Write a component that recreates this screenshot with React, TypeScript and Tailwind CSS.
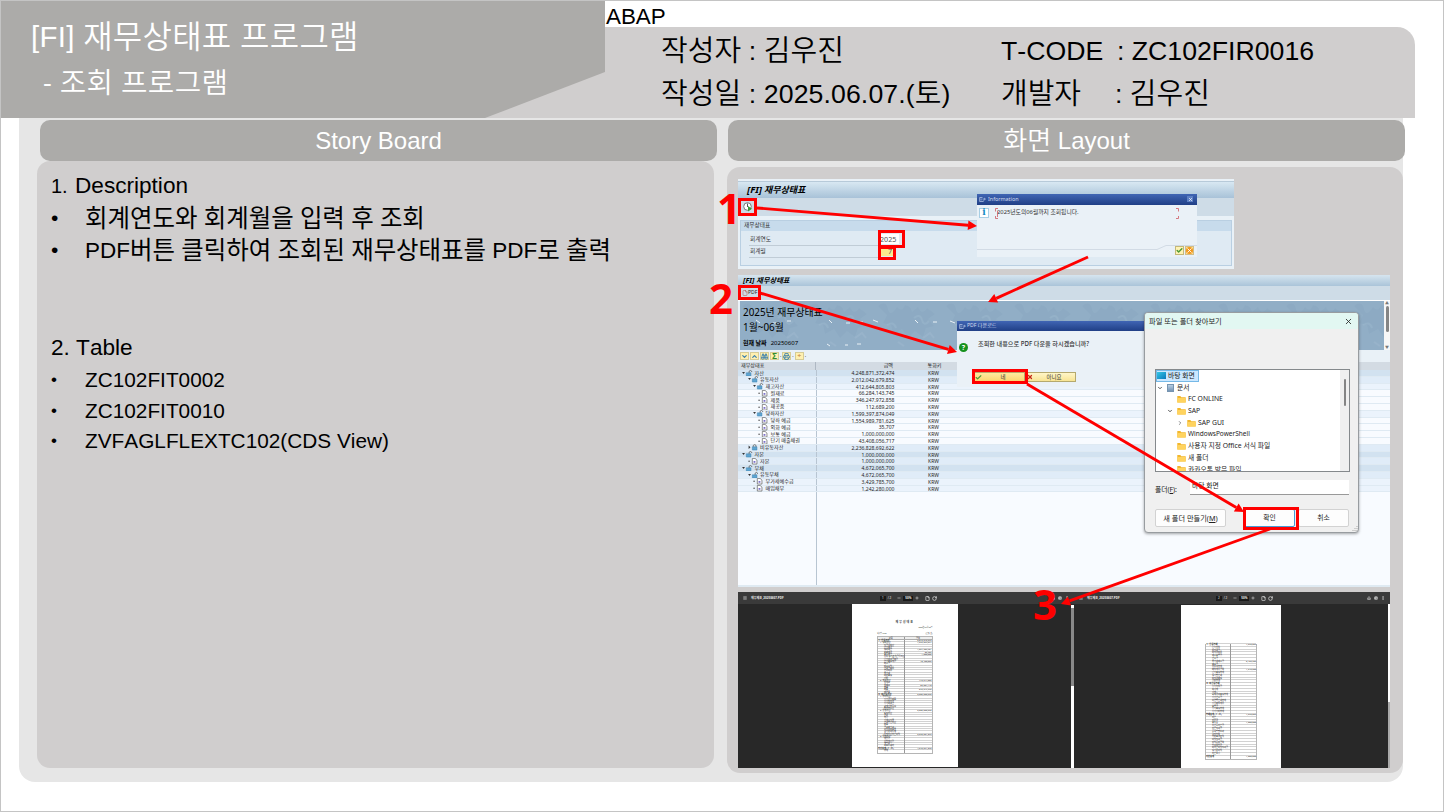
import React from "react";
import { Binoculars, Check, ChevronDown, ChevronRight, Download, Menu, Minus, MoreVertical, Plus, Printer, RotateCw, File, X } from "lucide-react";

const HANGUL = /([\uAC00-\uD7A3]+)/;

function Mixed({ text }: { text: string }) {
  return (
    <>
      {text.split(HANGUL).map((part, i) =>
        HANGUL.test(part) ? (
          <span key={i} className="align-[-0.045em] text-[1.087em] leading-[0]">{part}</span>
        ) : (
          <span key={i}>{part}</span>
        ),
      )}
    </>
  );
}

function Header() {
  return (
    <header className="flex h-[117px] w-full shrink-0 font-[350]">
      <div className="relative z-10 flex w-[604px] shrink-0 flex-col bg-[#acaba9] pt-[13px] text-white [clip-path:polygon(0_0,100%_0,100%_71px,484px_100%,0_100%)]">
        <h1 className="h-[46px] pl-[30px] text-[29.4px] leading-[46px] tracking-[.3px] whitespace-pre"><Mixed text="[FI] 재무상태표 프로그램" /></h1>
        <h2 className="h-[46px] pl-[42px] text-[26.5px] leading-[46px] tracking-[.3px] whitespace-pre"><Mixed text="- 조회 프로그램" /></h2>
      </div>
      <div className="-ml-[130px] flex w-[940px] flex-col">
        <div className="h-[26px] pl-[131px] text-[22.4px] leading-[32px]">ABAP</div>
        <div className="grid h-[91px] grid-cols-[340px_1fr] grid-rows-[43px_43px] rounded-tr-[18px] bg-[#d0cece] pt-[3px] pl-[186px] text-[26.67px] leading-[43px] whitespace-pre">
          <div className="tracking-[.1px]"><Mixed text="작성자 : 김우진" /></div>
          <div className="flex"><span className="w-[116px]">T-CODE</span><span>: ZC102FIR0016</span></div>
          <div className="tracking-[.1px]"><Mixed text="작성일 : 2025.06.07.(토)" /></div>
          <div className="flex"><span className="w-[114px]"><Mixed text="개발자" /></span><span><Mixed text=": 김우진" /></span></div>
        </div>
      </div>
    </header>
  );
}

function Bullet({ text, small = false }: { text: string; small?: boolean }) {
  return (
    <li className={small ? "flex h-[30.5px] text-[20.8px] leading-[31.5px]" : "flex h-[32px] text-[22.5px] leading-[32px]"}>
      <span className={small ? "w-[34px] shrink-0 text-[17px]" : "w-[34px] shrink-0 text-[21px] leading-[30px]"}>•</span>
      <span className="whitespace-pre"><Mixed text={text} /></span>
    </li>
  );
}

function StoryBoard() {
  return (
    <section className="flex w-[680px] flex-col">
      <div className="ml-[3px] h-[41px] w-[677px] rounded-[10px] bg-[#acaba9] text-center text-[24px] leading-[41px] text-white">Story Board</div>
      <div className="h-[607px] w-[677px] rounded-[13px] bg-[#d0cece] pt-[9px] pl-[14px]">
        <div className="flex h-[33px] items-baseline text-[22.6px] leading-[32px] whitespace-pre"><span className="w-[24px] text-[20px]">1.</span><span>Description</span></div>
        <ul>
          <Bullet text="회계연도와 회계월을 입력 후 조회" />
          <Bullet text="PDF버튼 클릭하여 조회된 재무상태표를 PDF로 출력" />
        </ul>
        <div className="mt-[65px] h-[32px] text-[22.6px] leading-[32px]">2. Table</div>
        <ul>
          <Bullet small text="ZC102FIT0002" />
          <Bullet small text="ZC102FIT0010" />
          <Bullet small text="ZVFAGLFLEXTC102(CDS View)" />
        </ul>
      </div>
    </section>
  );
}

const sapFont = "font-['Noto_Sans','Noto_Sans_CJK_KR',sans-serif]";

function WindowGlyph() {
  return (
    <svg viewBox="0 0 8 6" className="h-[5px] w-[7px]" fill="none" stroke="#c5d4f0" strokeWidth="0.8">
      <path d="M4 .6H.6v4.8H5V4M2.3 1.8v2.4M4 2.5h3.4M6 1.2l1.4 1.3L6 3.8" />
    </svg>
  );
}

function InformationPopup() {
  return (
    <div className="absolute top-[15px] left-[239px] h-[63px] w-[220px] bg-[#eaf1f7] text-[5.8px] text-[#333]">
      <div className="flex h-[10.5px] items-center gap-[2px] bg-linear-to-b from-[#4065b4] to-[#203f86] px-[2px] text-[5.4px] text-[#d5def0]">
        <WindowGlyph /><span className="grow">Information</span>
        <span className="mr-[2px] flex h-[6px] w-[6px] items-center justify-center bg-[#5c7fc4]"><X size={5} color="#fff" strokeWidth={3} /></span>
      </div>
      <div className="flex h-[40px] pt-[3px] pl-[2px]">
        <span className="flex h-[10px] w-[10px] items-center justify-center border border-[#a8cfe5] bg-white font-['DejaVu_Serif',serif] text-[9px] leading-none font-bold text-[#168bc4]">i</span>
        <div className="relative ml-[6px] h-[11px] w-[184px] pl-[2px] leading-[9px] whitespace-nowrap">
          2025년도의06월까지 조회됩니다.
          <svg viewBox="0 0 184 11" className="absolute inset-0" fill="none" stroke="#d36a72" strokeWidth=".9"><path d="M3 .5H.5v3M181 .5h2.5v3M.5 8v2.5H3M183.500 8v2.500H181M2.5 3v6" /></svg>
        </div>
      </div>
      <svg viewBox="0 0 220 6" className="h-[6px] w-[220px]" fill="none" stroke="#cbd6df" strokeWidth=".8"><path d="M0 4.500h180l9-4h31" /></svg>
      <div className="absolute right-[3px] bottom-[2px] flex gap-[1px]">
        <span className="flex h-[9px] w-[9px] items-center justify-center border border-[#c4b878] bg-[#fff3b5]"><Check size={7} color="#4d9a32" strokeWidth={5} /></span>
        <span className="flex h-[9px] w-[9px] items-center justify-center border border-[#d0bd88] bg-[#ffdf8e]"><X size={7} color="#fff" strokeWidth={3} className="rounded-full bg-[#f29a20]" /></span>
      </div>
    </div>
  );
}

function SelectionScreen() {
  return (
    <div className={`relative h-[90px] w-[496px] bg-[#e9f1f7] pt-[2px] text-[5.700px] text-[#333] ${sapFont}`}>
      <div className="h-[17px] border-t border-[#b7cad9] bg-linear-to-b from-[#d8e8f2] to-[#a8c2d8] pl-[9px] text-[9.500px] leading-[16px] font-bold text-black italic"><span className="mr-[2px]">[FI]</span><span className="text-[9px]">재무상태표</span></div>
      <div className="flex h-[18px] items-center bg-[#cedce7] pl-[5px]">
        <svg viewBox="0 0 10 10" className="h-[10px] w-[10px]"><circle cx="4.500" cy="4.500" r="3.800" fill="#fff" stroke="#777" /><path d="M4.500 1.500v3.500" stroke="#555" /><path d="M5 4l4 2.700L5 9.500z" fill="#3b9a3a" /></svg>
      </div>
      <div className="mx-[2px] mt-[4px] h-[46px] border border-[#b9cfe2] bg-[#dfeaf3]">
        <div className="h-[10px] bg-[#c7dbec] pl-[3px] leading-[9px]">재무상태표</div>
        <div className="mt-[2px] ml-[8px] flex h-[13px] w-[150px] items-center border-b border-[#c0ccd6] pl-[1px]"><span className="w-[132px]">회계연도</span><span className="h-[10px] w-[20px] shrink-0 bg-white pl-[1px] text-[7.200px] leading-[10px] text-[#555]">2025</span></div>
        <div className="ml-[8px] flex h-[12px] w-[144px] items-center border-b border-[#c0ccd6] pl-[1px]"><span className="w-[132px]">회계월</span><span className="h-[9px] w-[12px] shrink-0 bg-[#fce98d] pr-[1px] text-right text-[7.200px] leading-[9px] text-[#555]">7</span></div>
      </div>
      <InformationPopup />
    </div>
  );
}

type Row = { depth: number; kind: "open" | "closed" | "leaf"; name: string; amount: string; tone: string };
const rows: Row[] = [
  { depth: 0, kind: "open", name: "자산", amount: "4,248,871,372,474", tone: "bg-[#d2e2f0]" },
  { depth: 1, kind: "open", name: "유동자산", amount: "2,012,042,679,852", tone: "bg-[#e0ecf8]" },
  { depth: 2, kind: "open", name: "재고자산", amount: "412,644,805,803", tone: "bg-[#ebf3fc]" },
  { depth: 3, kind: "leaf", name: "원재료", amount: "66,284,143,745", tone: "bg-[#f8fbff]" },
  { depth: 3, kind: "leaf", name: "제품", amount: "346,247,972,858", tone: "bg-[#f8fbff]" },
  { depth: 3, kind: "leaf", name: "재공품", amount: "112,689,200", tone: "bg-[#f8fbff]" },
  { depth: 2, kind: "open", name: "당좌자산", amount: "1,599,397,874,049", tone: "bg-[#ebf3fc]" },
  { depth: 3, kind: "leaf", name: "당좌 예금", amount: "1,554,989,781,625", tone: "bg-[#f8fbff]" },
  { depth: 3, kind: "leaf", name: "외화 예금", amount: "35,707", tone: "bg-[#f8fbff]" },
  { depth: 3, kind: "leaf", name: "보통 예금", amount: "1,000,000,000", tone: "bg-[#f8fbff]" },
  { depth: 3, kind: "leaf", name: "단기 매출채권", amount: "43,408,056,717", tone: "bg-[#f8fbff]" },
  { depth: 1, kind: "closed", name: "비유동자산", amount: "2,236,828,692,622", tone: "bg-[#e0ecf8]" },
  { depth: 0, kind: "open", name: "자본", amount: "1,000,000,000", tone: "bg-[#d2e2f0]" },
  { depth: 1, kind: "leaf", name: "자본", amount: "1,000,000,000", tone: "bg-[#e0ecf8]" },
  { depth: 0, kind: "open", name: "부채", amount: "4,672,065,700", tone: "bg-[#d2e2f0]" },
  { depth: 1, kind: "open", name: "유동부채", amount: "4,672,065,700", tone: "bg-[#e0ecf8]" },
  { depth: 2, kind: "leaf", name: "부가세예수금", amount: "3,429,785,700", tone: "bg-[#ebf3fc]" },
  { depth: 2, kind: "leaf", name: "매입채무", amount: "1,242,280,000", tone: "bg-[#ebf3fc]" },
];
const indents = ["pl-[4px]", "pl-[9.500px]", "pl-[15px]", "pl-[20px]"];

function NodeIcon({ kind }: { kind: Row["kind"] }) {
  if (kind === "leaf")
    return (
      <svg viewBox="0 0 11 7" className="h-[6.500px] w-[10.500px] shrink-0"><circle cx="1" cy="3.500" r=".7" fill="#333" /><path d="M4.500.5h3l2 1.800v4.200h-5z" fill="#fff" stroke="#555" strokeWidth=".7" /><path d="M5.800 3.300h2v1.800h-2z" fill="#7368c8" /></svg>
    );
  return (
    <svg viewBox="0 0 11 7" className="h-[6.500px] w-[10.500px] shrink-0">
      {kind === "open" ? <path d="M0 2.200h3L1.500 4.200z" fill="#333" /> : <path d="M.5 1.500v4l2-2z" fill="#333" />}
      <path d="M4.500 3h5v3.500h-5z" fill="#5fa4d0" stroke="#347fae" strokeWidth=".5" />
      {kind === "open" ? <path d="M7.500 3V1.300Q9-.2 10.300 1.300V2.200" fill="none" stroke="#555" strokeWidth=".8" /> : <path d="M5.500 3V1.500Q7-.1 8.500 1.500V3" fill="none" stroke="#555" strokeWidth=".8" />}
    </svg>
  );
}

function PdfConfirm() {
  return (
    <div className="absolute top-[46px] left-[219px] h-[66px] w-[190px] bg-[#eaf1f7] text-[#333]">
      <div className="flex h-[10px] items-center gap-[1px] bg-linear-to-b from-[#4065b4] to-[#203f86] px-[2px] text-[5.100px] text-[#d5def0]"><WindowGlyph /><span>PDF 다운로드</span></div>
      <div className="flex h-[41px] pt-[8px] pl-[2px] text-[6.150px]">
        <span className="mt-[4px] flex h-[9px] w-[9px] items-center justify-center rounded-full bg-[#15911d] text-[7px] leading-none font-bold text-white">?</span>
        <span className="ml-[10px] leading-[9px] font-medium whitespace-nowrap">조회한 내용으로 PDF 다운을 하시겠습니까?</span>
      </div>
      <div className="flex pl-[17px] text-[5.500px] leading-[8px]">
        <span className="flex h-[10px] w-[51px] items-center border border-[#b5a96d] bg-linear-to-b from-[#ffe99e] to-[#fbd66f]"><Check size={7} color="#4b9a34" strokeWidth={4} /><span className="grow text-center">네</span></span>
        <span className="ml-[1px] flex h-[10px] w-[50px] items-center border border-[#b5a96d] bg-linear-to-b from-[#fff6c8] to-[#f8e493]"><X size={6} color="#c42b1c" strokeWidth={5} /><span className="grow text-center">아니요</span></span>
      </div>
    </div>
  );
}

function FolderGlyph() {
  return <svg viewBox="0 0 9 8" className="h-[8px] w-[9px] shrink-0"><path d="M.3 1h3l1 1.200h4.400V7.500H.3z" fill="#f2b72d" /><path d="M.3 3h8.400v4.500H.3z" fill="#ffd35e" /></svg>;
}

const folders = [
  { name: "FC ONLINE", pad: "pl-[21px]", chevron: "" },
  { name: "SAP", pad: "pl-[11px]", chevron: "down" },
  { name: "SAP GUI", pad: "pl-[21px]", chevron: "right" },
  { name: "WindowsPowerShell", pad: "pl-[21px]", chevron: "" },
  { name: "사용자 지정 Office 서식 파일", pad: "pl-[21px]", chevron: "" },
  { name: "새 폴더", pad: "pl-[21px]", chevron: "" },
  { name: "카카오톡 받은 파일", pad: "pl-[21px]", chevron: "" },
];

function FolderDialog() {
  return (
    <div className="absolute top-[37px] left-[406px] flex h-[221px] w-[215px] flex-col overflow-hidden rounded-[4px] border border-[#989ca0] bg-[#f0f0f0] text-[6.800px] text-[#222] shadow-[0_1px_3px_rgba(0,0,0,.35)]">
      <div className="flex h-[16px] shrink-0 items-center justify-between bg-[#e2f7f2] pr-[5px] pl-[4px]"><span className="text-[7.300px]">파일 또는 폴더 찾아보기</span><X size={9} strokeWidth={2.200} /></div>
      <div className="mt-[40px] ml-[10px] flex h-[103px] w-[195px] shrink-0 overflow-hidden border border-[#85898c] bg-white">
        <div className="flex w-[184px] flex-col leading-[11.700px] whitespace-nowrap">
          <div className="flex h-[11.700px] w-[43px] shrink-0 items-center gap-[2px] border border-[#76b9e7] bg-[#cce8ff]"><span className="h-[7px] w-[9px] shrink-0 bg-linear-to-br from-[#35c8e4] to-[#0879bd]" />바탕 화면</div>
          <div className="flex h-[11.700px] shrink-0 items-center pl-[1px]"><ChevronDown size={6} strokeWidth={3} /><span className="mr-[3px] ml-[4px] h-[8px] w-[7px] border border-[#7694b0] bg-linear-to-b from-[#b9cfe3] to-[#7595b5]" />문서</div>
          {folders.map((f) => (
            <div key={f.name} className={`flex h-[11.700px] shrink-0 items-center ${f.pad}`}>
              {f.chevron === "down" && <ChevronDown size={6} strokeWidth={3} className="mr-[4px] shrink-0" />}
              {f.chevron === "right" && <ChevronRight size={6} strokeWidth={2} className="mr-[4px] shrink-0" />}
              <FolderGlyph /><span className={f.name === "WindowsPowerShell" ? "ml-[2px] text-[6.500px]" : "ml-[2px]"}>{f.name}</span>
            </div>
          ))}
        </div>
        <div className="flex grow justify-center bg-[#f0f0f0] pt-[9px]"><span className="h-[27px] w-[2px] rounded bg-[#858585]" /></div>
      </div>
      <div className="mt-[8px] ml-[10px] flex h-[16px] shrink-0"><span className="w-[35px] pt-[5px] leading-[9px]">폴더(<u>F</u>):</span><span className="h-[15px] w-[159px] border-b border-[#999] bg-white pl-[2px] leading-[11px]">바탕 화면</span></div>
      <div className="mt-[13px] ml-[10px] flex h-[18px] shrink-0 text-center leading-[16px]">
        <span className="w-[71px] rounded-[2px] border border-[#d2d2d2] bg-[#fdfdfd] text-[7.200px]">새 폴더 만들기(<u>M</u>)</span>
        <span className="ml-[18px] w-[51px] rounded-[2px] border border-[#479bd4] bg-[#fdfdfd]">확인</span>
        <span className="ml-[3px] w-[51px] rounded-[2px] border border-[#d2d2d2] bg-[#fdfdfd]">취소</span>
      </div>
      <svg viewBox="0 0 6 6" className="absolute right-0 bottom-0 h-[6px] w-[6px]" fill="#aaa"><path d="M4.500 0h1v1h-1zM4.500 2h1v1h-1zM4.500 4h1v1h-1zM2.500 2h1v1h-1zM2.500 4h1v1h-1zM.5 4h1v1h-1z" /></svg>
    </div>
  );
}

function ToolIcon({ children }: { children: React.ReactNode }) {
  return <span className="flex h-[8px] w-[9px] items-center justify-center border border-[#d6cc96] bg-[#fff0b0] text-[#397fac]">{children}</span>;
}

function HeroTexture() {
  return (
    <svg viewBox="0 0 644 49" className="absolute inset-0 h-[49px] w-[644px]" aria-hidden="true">
      <defs>
        <pattern id="mottle" width="68" height="49" patternUnits="userSpaceOnUse">
          <path d="M2 5q8-6 10 3t9-2q5 6 8-2 6 1 7 7l6-5q4 9 9 1l8 6-7 5 6 7-8 2-3 9-8-6-7 7-6-9-9 5-2-9-8-2 4-8z" fill="#6f93b4" fillOpacity=".14" />
          <path d="M38 17q6-5 8 2t7 1M11 24q7-4 9 3M47 37l7-5 4 5M22 41l6 4" fill="none" stroke="#bdd0df" strokeOpacity=".16" strokeWidth="2" />
        </pattern>
      </defs>
      <rect width="644" height="49" fill="url(#mottle)" />
      <path d="M16 19l4 3m13 0h3m11-2h4m38-1l3 3m14 0h4m10-1h3m10-2l5 2m37-2l3 3m15-1h4m13-1l5 2M87 43l3 2m15-1h3m9-1h4" stroke="#e9f1f6" strokeWidth="1" fill="none" />
    </svg>
  );
}

function BalanceReport() {
  return (
    <div className={`relative mt-[6px] flex h-[312px] w-[652px] flex-col bg-[#f8fbff] text-[5.050px] text-[#252525] ${sapFont}`}>
      <div className="h-[11px] shrink-0 bg-linear-to-b from-[#d6e5ef] to-[#aac4d9] pl-[5px] text-[7.200px] leading-[10px] font-bold text-black italic"><span className="mr-[2px]">[FI]</span>재무상태표</div>
      <div className="flex h-[14px] shrink-0 items-center bg-[#cedce7] pl-[4px]"><File size={6} color="#b44d42" strokeWidth={2} /><span>PDF</span></div>
      <div className="flex h-[50px] shrink-0 border-t border-white bg-[#e9f1f7] pl-[2px]">
        <div className="relative w-[644px] shrink-0 bg-[#91aec6] pt-[4px] pl-[3px] text-[9.900px] leading-[14px] text-black">
          <HeroTexture />
          <div className="relative h-[15px]">2025년 재무상태표</div><div className="relative h-[15px]">1월~06월</div>
          <div className="relative flex gap-[4px] text-[6px] leading-[17px]"><b>현재 날짜</b><span>20250607</span></div>
        </div>
        <div className="flex grow flex-col items-center justify-between bg-[#f7f7f7] text-[4px] leading-[5px] text-[#777]"><span>▲</span><span className="mb-auto h-[26px] w-[3px] rounded bg-[#858585]" /><span>▼</span></div>
      </div>
      <div className="flex h-[12px] shrink-0 items-center gap-[1px] bg-[#e9f1f7] pl-[2px]">
        <ToolIcon><ChevronDown size={7} strokeWidth={4} /></ToolIcon><ToolIcon><ChevronRight size={7} strokeWidth={4} className="-rotate-90" /></ToolIcon><ToolIcon><Binoculars size={7} strokeWidth={3} /></ToolIcon>
        <ToolIcon><span className="text-[8px] leading-none font-bold text-[#328d2e]">Σ</span></ToolIcon><span>.</span><ToolIcon><Printer size={7} strokeWidth={3} /></ToolIcon><span>.</span><ToolIcon><span className="text-[7px] text-[#b16324]">÷</span></ToolIcon><span>.</span>
      </div>
      <div className="flex h-[8px] shrink-0 items-center bg-[#d3dbe3] text-[5.100px]"><span className="w-[78px] border-r border-[#aeb8c3] pl-[3px]">재무상태표</span><span className="w-[78px] pr-[1px] text-right">금액</span><span className="w-[81px] text-center">통화키</span></div>
      {rows.map((r, i) => (
        <div key={i} className={`flex h-[6.800px] shrink-0 border-b border-[#dfeaf3] leading-[6.800px] ${r.tone}`}>
          <div className={`flex w-[78.500px] shrink-0 items-center gap-[2px] border-r border-[#b8c5d2] whitespace-nowrap ${indents[r.depth]}`}><NodeIcon kind={r.kind} /><span className="text-[5.100px]">{r.name}</span></div>
          <span className="w-[78px] text-right">{r.amount}</span><span className="w-[78px] text-center">KRW</span>
        </div>
      ))}
      <div className="w-[78.500px] grow border-r border-[#b8c5d2]" />
      <div className="h-[2px] bg-[#dfeaf2]" />
      <PdfConfirm />
      <FolderDialog />
    </div>
  );
}

type Line = [indent: 0 | 1 | 2, label: string, amount?: string];
const pageOne: Line[] = [
  [0, "Ⅰ. 유동자산", "2,012,042,679"], [1, "1. 당좌자산", "1,599,397,874"], [2, "현금성자산"], [2, "단기예금"], [2, "당좌예금", "1,554,989,781"], [2, "외화예금", "35,707"], [2, "보통예금", "1,000,000"], [2, "유동 당기손익금융자산"], [2, "단기대여금채권"], [2, "단기매출채권", "43,408,056"], [2, "미수금"], [2, "미수수익"], [2, "선급금비용"], [2, "선급비용"], [2, "부가세"], [2, "대손충당"], [2, "기타"],
  [1, "2. 재고자산", "412,644,805"], [2, "원재료"], [2, "원재료", "66,284,143"], [2, "상품"], [2, "제품", "346,247,972"], [2, "재공품"], [0, "Ⅱ. 비유동자산", "2,236,828,692"], [1, "1. 투자자산"], [2, "장기금융상품"], [2, "장기투자금"], [2, "장기대여금"], [2, "관계기업주식"], [2, "투자부동산"],
  [1, "2. 유형자산", "2,236,828,692"], [2, "토지자산"], [2, "건물"], [2, "차량"], [2, "기계장치류"], [2, "건설중인자산"], [2, "비품"], [2, "공구와기구"], [2, "사무용비품류"], [2, "감가상각누계"], [2, "유형자산처분이익", "2,570,601,379"], [1, "3. 무형자산"], [2, "영업권"], [2, "산업재산권"], [2, "개발비"], [2, "소프트웨어"], [0, "자산총계 (Ⅰ+Ⅱ)", "4,248,871,372"], [2, "부채"],
];
const pageTwo: Line[] = [
  [0, "Ⅰ. 유동부채", "4,672,065"], [2, "단기차입"], [2, "미지급금"], [2, "미지급비용"], [2, "예수보증금"], [2, "선수금"], [2, "부가세예수금", "3,429,785"], [2, "예수금"], [2, "유동성부채"], [2, "매입채무금액", "1,242,280"], [2, "단기충당부채"], [2, "당기법인세"], [2, "미지급배당"], [2, "기타부채"], [0, "Ⅱ. 비유동부채"], [2, "장기차입금"], [2, "회사채"], [2, "사채"], [2, "퇴직급여충당부채"], [2, "장기선수금"], [2, "이연법인세부채"], [2, "장기매입채무"], [2, "보증금"], [2, "장기충당부채"], [2, "장기기타부채"], [0, "부채총계 (Ⅰ+Ⅱ)", "4,672,065"], [2, "자본"], [2, "자본금"], [2, "보통주", "1,000,000"], [2, "우선주자본금"], [2, "자본잉여금"], [2, "주식발행초과"], [2, "감자차익"], [2, "기타포괄손익"], [2, "이익잉여금"], [2, "이익준비금액"], [2, "임의적립금"], [2, "미처분이익잉여금"], [2, "당기순이익"], [2, "자본조정"], [0, "자본총계", "1,000,000"],
];
const lineIndent = ["pl-0 font-bold", "pl-[2px]", "pl-[6px]"];

function Sheet({ lines, compact }: { lines: Line[]; compact: boolean }) {
  return (
    <div className="border-x border-b border-[#b5b5b5] text-[2.200px] text-[#222]">
      {lines.map(([indent, label, amount], i) => (
        <div key={i} className={compact ? "flex h-[2.350px] leading-[2.350px] shadow-[0_-0.5px_0_#a5a5a5]" : "flex h-[2.800px] leading-[2.800px] shadow-[0_-0.5px_0_#a5a5a5]"}>
          <span className={`w-1/2 border-r-[.5px] border-[#999] whitespace-nowrap ${lineIndent[indent]}`}>{label}</span><span className="w-1/2 text-right">{amount}</span>
        </div>
      ))}
    </div>
  );
}

function ViewerBar({ page }: { page: string }) {
  return (
    <div className="flex h-[12px] shrink-0 items-center bg-[#3a3a3a] px-[5px] text-[3px] leading-none text-[#ededed]">
      <Menu size={4} strokeWidth={3} /><b className="ml-[4px] w-[129px]">재무제표_20250607.PDF</b>
      <span className="bg-[#191919] px-[2px] py-px">{page}</span><span className="mr-[6px] ml-[2px]">/ 2</span><Minus size={4} strokeWidth={3} /><span className="mx-[2px] bg-[#191919] px-[2px] py-px font-bold">50%</span><Plus size={4} strokeWidth={3} />
      <File size={5} className="ml-[6px]" strokeWidth={3} /><RotateCw size={5} className="ml-[2px]" strokeWidth={3} />
      <Download size={4} className="mr-[3px] ml-auto" strokeWidth={3} /><Printer size={4} strokeWidth={3} /><MoreVertical size={4} className="ml-[3px]" strokeWidth={3} />
    </div>
  );
}

function PdfPages() {
  return (
    <div className={`mt-[5px] flex h-[176px] w-[652px] overflow-hidden bg-[#282828] ${sapFont}`}>
      <div className="flex w-[336px] flex-col">
        <ViewerBar page="1" />
        <div className="flex h-[164px] pl-[114px]">
          <div className="h-[163px] w-[105.500px] bg-white px-[25px] pt-[16px] text-[#333]">
            <div className="text-center text-[2.900px] leading-[5px] font-bold tracking-[1px]">재무상태표</div>
            <div className="h-[7px] text-right text-[1.800px] leading-[5px]">2025년 06월 30일</div>
            <div className="flex h-[4px] justify-between text-[1.800px] leading-[4px]"><span>회사명 C102</span><span>(단위: 원)</span></div>
            <div className="flex h-[4px] border border-[#b5b5b5] bg-[#eee] text-center text-[2.200px] leading-[3px]"><span className="w-1/2 border-r border-[#999]">과목</span><span className="w-1/2">금액</span></div>
            <Sheet lines={pageOne} compact />
          </div>
          <div className="mt-[1px] ml-auto h-[163px] w-[3px] bg-white pt-[3px]"><div className="h-[78px] bg-[#898989]" /></div>
        </div>
      </div>
      <div className="flex grow flex-col">
        <ViewerBar page="2" />
        <div className="flex h-[164px] pl-[107px]">
          <div className="mt-[1px] h-[163px] w-[100px] bg-white px-[24px] pt-[39px]"><Sheet lines={pageTwo} compact={false} /></div>
          <div className="ml-auto w-[2px] bg-white pt-[98px]"><div className="h-[66px] bg-[#aaa]" /></div>
        </div>
      </div>
    </div>
  );
}

function LayoutPanel() {
  return (
    <section className="ml-[10px] flex w-[678px] shrink-0 flex-col">
      <div className="ml-[1px] h-[41px] w-[677px] rounded-[10px] bg-[#acaba9] text-center text-[24px] leading-[41px] font-[350] text-white"><Mixed text="화면 Layout" /></div>
      <div className="mt-[6px] h-[606px] w-[676px] rounded-[13px] bg-[#d0cece] pt-[12px] pl-[11px]">
        <SelectionScreen />
        <BalanceReport />
        <PdfPages />
      </div>
    </section>
  );
}

const arrows: [number, number, number, number][] = [
  [757, 208, 977, 226], [1088, 257, 988, 302], [760, 293, 957, 352], [1027, 384, 1244, 512], [1270, 529, 1061, 604],
];
const boxes = [
  "top-[198px] left-[738px] h-[18px] w-[19px]",
  "top-[230px] left-[878px] h-[18px] w-[27px]",
  "top-[246px] left-[878px] h-[14px] w-[18px]",
  "top-[285px] left-[738px] h-[15px] w-[23px]",
  "top-[369px] left-[972px] h-[15px] w-[56px]",
  "top-[507px] left-[1243px] h-[23px] w-[56px]",
];

function Annotations() {
  return (
    <div className="pointer-events-none absolute inset-0 z-20">
      <svg viewBox="0 0 1444 812" className="absolute inset-0 h-[812px] w-[1444px]">
        {arrows.map(([x1, y1, x2, y2], i) => {
          const d = Math.hypot(x2 - x1, y2 - y1);
          const ux = (x2 - x1) / d, uy = (y2 - y1) / d;
          const bx = x2 - ux * 9, by = y2 - uy * 9;
          return <g key={i} fill="#f00"><line x1={x1} y1={y1} x2={bx} y2={by} stroke="#f00" strokeWidth="2.900" /><polygon points={`${x2},${y2} ${bx - uy * 4.7},${by + ux * 4.7} ${bx + uy * 4.7},${by - ux * 4.7}`} /></g>;
        })}
      </svg>
      {boxes.map((b) => <div key={b} className={`absolute border-3 border-[#f00] ${b}`} />)}
      <div className="font-['Open_Sans',sans-serif] text-[42px] leading-[42px] font-bold text-[#f00]">
        <span className="absolute top-[187px] left-[717px]">1</span>
        <span className="absolute top-[277px] left-[709px]">2</span>
        <span className="absolute top-[583px] left-[1033px]">3</span>
      </div>
    </div>
  );
}

export default function App() {
  return (
    <div className="relative flex h-[812px] w-[1444px] flex-col overflow-hidden border border-[#c4c4c4] bg-white font-['Liberation_Sans','Noto_Sans_CJK_KR',sans-serif] text-black [font-kerning:none]">
      <Header />
      <main className="ml-[18px] flex h-[664px] w-[1384px] rounded-b-[16px] bg-[#e6e6e6] pt-[2px] pl-[18px]">
        <StoryBoard />
        <LayoutPanel />
      </main>
      <div className="absolute -top-px -left-px"><div className="relative h-[812px] w-[1444px]"><Annotations /></div></div>
    </div>
  );
}
